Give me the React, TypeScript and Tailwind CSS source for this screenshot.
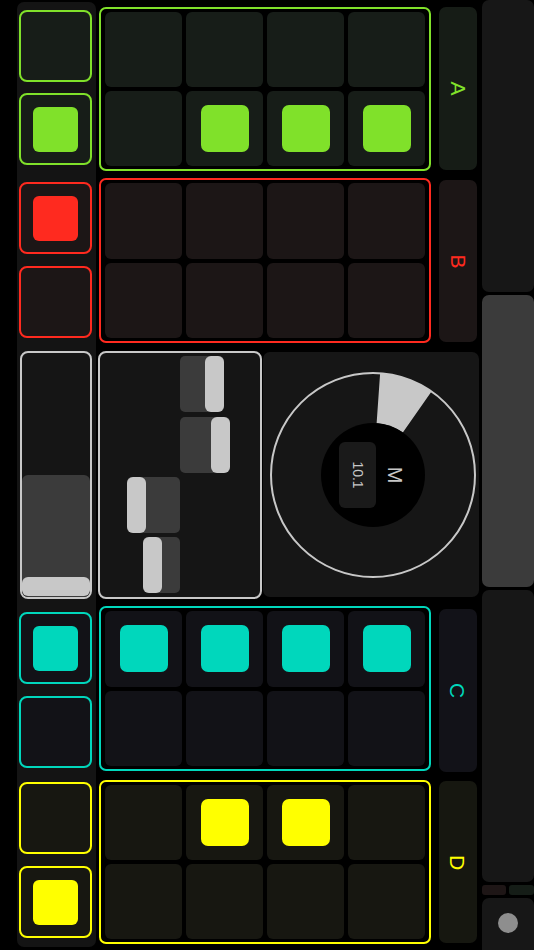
import React from 'react';

type Tone = {
  line: string;
  cell: string;
  fill: string;
  label: string;
  text: string;
};

const GREEN: Tone = {
  line: 'border-[#80e12a]',
  cell: 'bg-[#171d18]',
  fill: 'bg-[#80e12a]',
  label: 'bg-[#161c16]',
  text: 'text-[#80e12a]',
};
const RED: Tone = {
  line: 'border-[#ff2a1f]',
  cell: 'bg-[#1c1616]',
  fill: 'bg-[#ff2a1f]',
  label: 'bg-[#1c1616]',
  text: 'text-[#ff2a1f]',
};
const TEAL: Tone = {
  line: 'border-[#00d7bc]',
  cell: 'bg-[#121217]',
  fill: 'bg-[#00d7bc]',
  label: 'bg-[#121218]',
  text: 'text-[#00d7bc]',
};
const YELLOW: Tone = {
  line: 'border-[#ffff00]',
  cell: 'bg-[#171711]',
  fill: 'bg-[#ffff00]',
  label: 'bg-[#161710]',
  text: 'text-[#ffff00]',
};

function SideButton({ tone, on, className }: { tone: Tone; on?: boolean; className: string }) {
  return (
    <div
      className={`w-[73px] h-[72px] shrink-0 rounded-[8px] border-2 ${tone.line} ${tone.cell} flex items-center justify-center ${className}`}
    >
      {on && <div className={`w-[45px] h-[45px] rounded-[6px] ${tone.fill}`} />}
    </div>
  );
}

function PadRow({
  tone,
  letter,
  active,
  className,
  boxH,
  labelClass,
}: {
  tone: Tone;
  letter: string;
  active: number[];
  className: string;
  boxH: string;
  labelClass: string;
}) {
  return (
    <div className={`flex items-start shrink-0 ${className}`}>
      {/* pad grid */}
      <div
        className={`ml-[1px] w-[332px] ${boxH} rounded-[7px] border-2 ${tone.line} px-[4px] py-[3px] grid grid-cols-4 grid-rows-2 gap-[4px]`}
      >
        {Array.from({ length: 8 }).map((_, i) => (
          <div key={i} className={`rounded-[6px] ${tone.cell} flex items-center justify-center`}>
            {active.includes(i) && <div className={`w-[48px] h-[47px] rounded-[7px] ${tone.fill}`} />}
          </div>
        ))}
      </div>
      {/* bank label */}
      <div className={`ml-[8px] w-[38px] rounded-[7px] ${tone.label} flex items-center justify-center ${labelClass}`}>
        <span className={`rotate-90 text-[21px] leading-none ${tone.text}`}>{letter}</span>
      </div>
    </div>
  );
}

const BARS = [
  { ml: 'ml-[80px]', w: 'w-[44px]', right: true },
  { ml: 'ml-[80px]', w: 'w-[50px]', right: true },
  { ml: 'ml-[27px]', w: 'w-[53px]', right: false },
  { ml: 'ml-[43px]', w: 'w-[37px]', right: false },
];

function Knob() {
  return (
    <div className="relative w-[210px] h-[210px]">
      <svg width="210" height="210" viewBox="0 0 210 210">
        <circle cx="105" cy="105" r="102" fill="none" stroke="#c8c8c8" strokeWidth="2" />
        <path
          d="M 112.12 3.25 A 102 102 0 0 1 163.5 21.44 L 134.83 62.4 A 52 52 0 0 0 108.63 53.13 Z"
          fill="#c8c8c8"
        />
        <circle cx="105" cy="105" r="52" fill="#000" />
      </svg>
      <div className="absolute left-[71px] top-[72px] w-[37px] h-[66px] rounded-[6px] bg-[#1a1a1a] flex items-center justify-center">
        <span className="rotate-90 text-[14px] leading-none text-[#c8c8c8]">10.1</span>
      </div>
      <span className="absolute left-[127px] top-[105px] -translate-x-1/2 -translate-y-1/2 rotate-90 text-[20px] leading-none text-[#c8c8c8]">
        M
      </span>
    </div>
  );
}

export default function App() {
  return (
    <div className="w-[534px] h-[950px] bg-black flex overflow-hidden font-['Liberation_Sans',Arial,sans-serif]">
      {/* left strip */}
      <div className="ml-[17px] mt-[2px] w-[79px] h-[945px] shrink-0 rounded-[7px] bg-[#141414] flex flex-col pl-[2px] pt-[8px]">
        <SideButton tone={GREEN} className="" />
        <SideButton tone={GREEN} on className="mt-[11px]" />
        <SideButton tone={RED} on className="mt-[17px]" />
        <SideButton tone={RED} className="mt-[12px]" />

        {/* fader */}
        <div className="mt-[13px] ml-[1px] w-[72px] h-[248px] shrink-0 rounded-[8px] border-2 border-[#c8c8c8] bg-[#151515] overflow-hidden flex flex-col justify-end">
          <div className="h-[122px] rounded-t-[6px] bg-[#3b3b3b] flex flex-col justify-end pb-[1px]">
            <div className="h-[19px] rounded-[6px] bg-[#c8c8c8]" />
          </div>
        </div>

        <SideButton tone={TEAL} on className="mt-[13px]" />
        <SideButton tone={TEAL} className="mt-[12px]" />
        <SideButton tone={YELLOW} className="mt-[14px]" />
        <SideButton tone={YELLOW} on className="mt-[12px]" />
      </div>

      {/* main area */}
      <div className="ml-[2px] w-[381px] shrink-0 flex flex-col pt-[7px]">
        <PadRow tone={GREEN} letter="A" active={[5, 6, 7]} className="" boxH="h-[164px]" labelClass="h-[163px]" />
        <PadRow tone={RED} letter="B" active={[]} className="mt-[7px]" boxH="h-[165px]" labelClass="mt-[2px] h-[162px]" />

        {/* multi slider + knob */}
        <div className="mt-[8px] h-[248px] flex items-start shrink-0">
          <div className="w-[164px] h-[248px] rounded-[8px] border-2 border-[#c8c8c8] bg-[#151515] flex flex-col pt-[3px] gap-[4px]">
            {BARS.map((b, i) => (
              <div key={i} className={`h-[56px] ${i === 1 ? 'mt-[1px]' : ''} flex`}>
                <div
                  className={`${b.ml} ${b.w} h-full rounded-[5px] bg-[#3b3b3b] flex ${b.right ? 'justify-end' : 'justify-start'}`}
                >
                  <div className="w-[19px] h-full rounded-[6px] bg-[#c8c8c8]" />
                </div>
              </div>
            ))}
          </div>
          <div className="mt-[1px] ml-[1px] w-[216px] h-[245px] rounded-[7px] bg-[#161616] flex items-center justify-center pl-[4px]">
            <Knob />
          </div>
        </div>

        <PadRow tone={TEAL} letter="C" active={[0, 1, 2, 3]} className="mt-[7px]" boxH="h-[165px]" labelClass="mt-[3px] h-[163px]" />
        <PadRow tone={YELLOW} letter="D" active={[1, 2]} className="mt-[8px]" boxH="h-[164px]" labelClass="mt-[1px] h-[162px]" />
      </div>

      {/* right column */}
      <div className="ml-[3px] w-[52px] shrink-0 flex flex-col">
        <div className="h-[292px] shrink-0 rounded-[7px] bg-[#171717]" />
        <div className="mt-[3px] h-[292px] shrink-0 rounded-[7px] bg-[#3b3b3b]" />
        <div className="mt-[3px] h-[292px] shrink-0 rounded-[7px] bg-[#171717]" />
        <div className="mt-[3px] h-[10px] shrink-0 flex gap-[3px]">
          <div className="w-[24px] rounded-[3px] bg-[#1e1616]" />
          <div className="flex-1 rounded-[3px] bg-[#151d17]" />
        </div>
        <div className="mt-[3px] h-[60px] shrink-0 rounded-[7px] bg-[#171717] flex justify-center pt-[15px]">
          <div className="w-[20px] h-[20px] rounded-full bg-[#8e8e8e]" />
        </div>
      </div>
    </div>
  );
}
